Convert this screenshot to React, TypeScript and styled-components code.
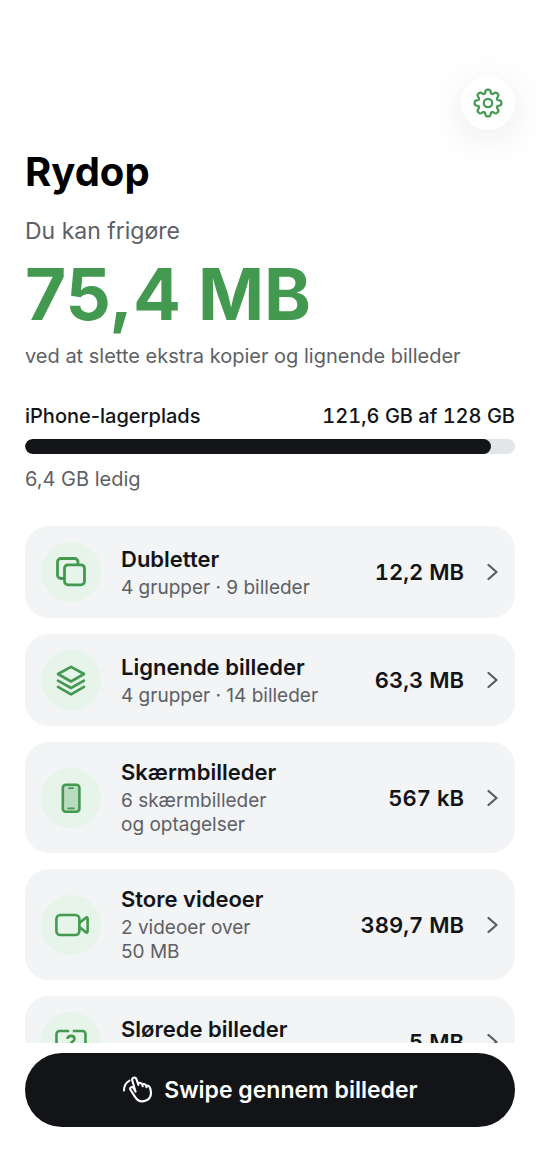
import React from 'react';
import styled, { createGlobalStyle } from 'styled-components';

const ink = '#121418';
const muted = '#5d6066';
const green = '#43994f';

const GlobalStyle = createGlobalStyle`
  * { box-sizing: border-box; }
  body {
    margin: 0;
    background: #fff;
    color: ${ink};
    font-family: Inter, 'Liberation Sans', sans-serif;
  }
  h1, h2, p { margin: 0; }
`;

const Screen = styled.div`
  display: flex;
  flex-direction: column;
  height: 100vh;
`;

const Content = styled.main`
  flex: 1;
  min-height: 0;
  overflow-y: auto;
  scrollbar-width: none;
  padding: 76px 25px 24px;
`;

const TopBar = styled.header`
  display: flex;
  justify-content: flex-end;
`;

const RoundButton = styled.button`
  display: grid;
  place-items: center;
  width: 54px;
  height: 54px;
  padding: 0;
  border: 0;
  border-radius: 50%;
  background: #fff;
  color: ${green};
  box-shadow: 0 8px 40px rgba(0, 0, 0, 0.09);
`;

const Title = styled.h1`
  margin-top: 18px;
  color: #000;
  font-size: 40px;
  line-height: 48px;
  font-weight: 700;
`;

const Lead = styled.p`
  margin-top: 20px;
  color: ${muted};
  font-size: 23px;
  line-height: 30px;
`;

const Amount = styled.p`
  color: ${green};
  font-size: 71px;
  line-height: 96px;
  font-weight: 700;
`;

const Note = styled.p`
  color: ${muted};
  font-size: 20px;
  line-height: 28px;
`;

const Storage = styled.section`
  margin-top: 32px;
`;

const StorageLabels = styled.div`
  display: flex;
  justify-content: space-between;
  font-size: 20px;
  line-height: 28px;
  font-weight: 500;
`;

const StorageValue = styled.span`
  font-variant-numeric: tabular-nums;
`;

const Track = styled.div`
  height: 15px;
  margin: 9px 0 11px;
  border-radius: 8px;
  background: #e3e6e9;
  overflow: hidden;
`;

const Fill = styled.div`
  height: 100%;
  border-radius: 8px;
  background: ${ink};
`;

const List = styled.div`
  display: flex;
  flex-direction: column;
  gap: 16px;
  margin-top: 33px;
`;

const Card = styled.button`
  display: flex;
  align-items: center;
  width: 100%;
  padding: 16px 11px 16px 16px;
  border: 0;
  border-radius: 24px;
  background: #f3f4f6;
  color: ${ink};
  font: inherit;
  text-align: left;
`;

const IconDisc = styled.span`
  display: grid;
  place-items: center;
  flex: none;
  width: 60px;
  height: 60px;
  border-radius: 50%;
  background: #e6f4ea;
  color: ${green};
`;

const CardText = styled.span`
  flex: 1;
  min-width: 0;
  margin-left: 20px;
`;

const CardTitle = styled.span`
  display: block;
  margin-bottom: 3px;
  font-size: 22px;
  line-height: 28px;
  font-weight: 600;
`;

const CardDetail = styled.span`
  display: block;
  color: ${muted};
  font-size: 19px;
  line-height: 24px;
  white-space: pre-line;
`;

const CardSize = styled.span`
  margin: 0 16px 0 12px;
  font-size: 22px;
  line-height: 28px;
  font-weight: 600;
  font-variant-numeric: tabular-nums;
  white-space: nowrap;
`;

const Footer = styled.footer`
  padding: 10px 25px 46px;
`;

const SwipeButton = styled.button`
  display: flex;
  align-items: center;
  justify-content: center;
  gap: 10px;
  width: 100%;
  height: 74px;
  border: 0;
  border-radius: 37px;
  background: ${ink};
  color: #fff;
  font: inherit;
  font-size: 23px;
  font-weight: 600;
`;

const Svg = styled.svg`
  display: block;
  flex: none;
  fill: none;
  stroke: currentColor;
  stroke-linejoin: round;
`;

const Chevron = styled(Svg)`
  color: #5a5d62;
`;

// Eight flat-topped teeth, traced as a softened wave around the centre.
const gearPath =
  Array.from({ length: 192 }, (_, i) => {
    const angle = (i / 192) * Math.PI * 2;
    const radius = 11.6 + 1.8 * Math.tanh(1.9 * Math.cos(8 * angle));
    const warped = angle + 0.03 * Math.sin(8 * angle);
    const x = 16 + radius * Math.sin(warped);
    const y = 16 - radius * Math.cos(warped);
    return `${i ? 'L' : 'M'}${x.toFixed(2)} ${y.toFixed(2)}`;
  }).join('') + 'Z';

const GearIcon = () => (
  <Svg width="32" height="32" viewBox="0 0 32 32" strokeWidth="2.2" aria-hidden="true">
    <path d={gearPath} />
    <circle cx="16" cy="16" r="4.2" />
  </Svg>
);

const CopiesIcon = () => (
  <Svg width="32" height="32" viewBox="0 0 32 32" strokeWidth="2.8" strokeLinecap="round">
    <path d="M8.5 22.5H6A3.5 3.5 0 0 1 2.5 19V6A3.5 3.5 0 0 1 6 2.5h13.5A3.5 3.5 0 0 1 23 6v2.5" />
    <rect x="9.5" y="8.8" width="20" height="20" rx="3.5" />
  </Svg>
);

const StackIcon = () => (
  <Svg width="32" height="32" viewBox="0 0 32 32" strokeWidth="2.6" strokeLinecap="round">
    <path d="M16 2.8 29 10 16 17.5 3 10Z" />
    <path d="m3 16.6 13 7.4 13-7.4" />
    <path d="m3 22.8 13 7.6 13-7.6" />
  </Svg>
);

const PhoneIcon = () => (
  <Svg width="32" height="32" viewBox="0 0 32 32" strokeWidth="2.6" strokeLinecap="round">
    <rect x="7.8" y="2.8" width="16.6" height="27" rx="3" fill="currentColor" fillOpacity="0.28" />
    <path d="M14 6.2h4M13 26.3h6" strokeWidth="1.7" />
  </Svg>
);

const VideoIcon = () => (
  <Svg width="36" height="36" viewBox="0 0 36 36" strokeWidth="2.6" strokeLinecap="round">
    <rect x="3.4" y="8" width="23" height="20" rx="4" />
    <path d="m26.4 16 6.5-5.3c.8-.7 1.7-.2 1.7.8v13c0 1-.9 1.5-1.7.8L26.4 20" />
  </Svg>
);

const BlurIcon = () => (
  <Svg width="36" height="36" viewBox="0 0 36 36" strokeWidth="2.6">
    <path d="M16.2 7H6.5A3 3 0 0 0 3.5 10v16a3 3 0 0 0 3 3h9.7M19.8 7h9.7a3 3 0 0 1 3 3v16a3 3 0 0 1-3 3h-9.7" />
    <path d="M14.5 14.9c0-4 7-4 7 0 0 2.5-3.5 2.5-3.5 5.2M18 23v2.4" />
  </Svg>
);

const HandIcon = () => (
  <Svg width="32" height="28" viewBox="0 0 32 28" strokeWidth="2.1" strokeLinecap="round" aria-hidden="true">
    <path d="M2 14.5C2 10 4 6.500 7.500 4.600" />
    <path d="M13.500 15.600 10.300 4.500c-.9-3 3.100-4.200 4.100-1.300l2 5.700M16.100 7.600c1.700-1.600 3.900-.8 4.300 1.500l.3 1.200M20.300 8.500c1.500-1 3.400-.3 3.900 1.500l.3 1.300M24 9.700c2.400-.7 3.600.6 4.200 2.700 1.600 5.400.7 10-4.200 12.100-4.600 1.900-8.500.3-11-3.600L8.600 14c-1.500-2.500 1.200-4 2.900-1.900l2 3.500" />
  </Svg>
);

const items = [
  { title: 'Dubletter', detail: '4 grupper · 9 billeder', size: '12,2 MB', Icon: CopiesIcon },
  { title: 'Lignende billeder', detail: '4 grupper · 14 billeder', size: '63,3 MB', Icon: StackIcon },
  { title: 'Skærmbilleder', detail: '6 skærmbilleder\nog optagelser', size: '567 kB', Icon: PhoneIcon },
  { title: 'Store videoer', detail: '2 videoer over\n50 MB', size: '389,7 MB', Icon: VideoIcon },
  { title: 'Slørede billeder', detail: '3 billeder', size: '5 MB', Icon: BlurIcon },
];

export default function App() {
  const used = 121.6;
  const total = 128;
  return (
    <>
      <GlobalStyle />
      <Screen>
        <Content>
          <TopBar>
            <RoundButton type="button" aria-label="Indstillinger">
              <GearIcon />
            </RoundButton>
          </TopBar>
          <Title>Rydop</Title>
          <Lead>Du kan frigøre</Lead>
          <Amount>75,4 MB</Amount>
          <Note>ved at slette ekstra kopier og lignende billeder</Note>
          <Storage>
            <StorageLabels>
              <span>iPhone-lagerplads</span>
              <StorageValue>121,6 GB af 128 GB</StorageValue>
            </StorageLabels>
            <Track>
              <Fill style={{ width: `${(used / total) * 100}%` }} />
            </Track>
            <Note>6,4 GB ledig</Note>
          </Storage>
          <List>
            {items.map(({ title, detail, size, Icon }) => (
              <Card type="button" key={title}>
                <IconDisc aria-hidden="true">
                  <Icon />
                </IconDisc>
                <CardText>
                  <CardTitle>{title}</CardTitle>
                  <CardDetail>{detail}</CardDetail>
                </CardText>
                <CardSize>{size}</CardSize>
                <Chevron
                  width="24"
                  height="24"
                  viewBox="0 0 24 24"
                  strokeWidth="2.3"
                  strokeLinecap="round"
                  aria-hidden="true"
                >
                  <path d="m8.5 5 8 7-8 7" />
                </Chevron>
              </Card>
            ))}
          </List>
        </Content>
        <Footer>
          <SwipeButton type="button">
            <HandIcon />
            Swipe gennem billeder
          </SwipeButton>
        </Footer>
      </Screen>
    </>
  );
}
